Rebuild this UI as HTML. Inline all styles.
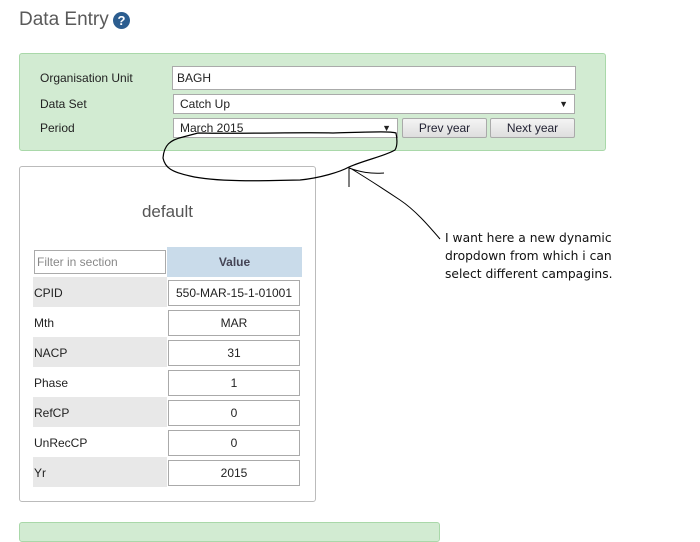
<!DOCTYPE html>
<html><head><style>
*{box-sizing:border-box;margin:0;padding:0}
body{width:700px;height:529px;background:#fff;font-family:"Liberation Sans",sans-serif;position:relative;overflow:hidden;color:#222}
.a{position:absolute}
.lbl{font-size:12px;color:#222}
.inp{position:absolute;background:#fff;border:1px solid #aaa;font-size:12px;padding-left:6px;line-height:normal;display:flex;align-items:center}
.btn{position:absolute;background:linear-gradient(#f4f4f4,#dedede);border:1px solid #aaa;border-radius:2px;font-size:12px;color:#223;display:flex;align-items:center;justify-content:center}
.row{position:absolute;left:33px;width:134px;height:30px;font-size:12px;padding:9px 0 0 1px}
.g{background:#e8e8e8}
.val{position:absolute;left:168px;width:132px;height:26px;border:1px solid #aaa;background:#fff;font-size:12px;text-align:center;line-height:24px}
.note{font-family:"DejaVu Sans","Liberation Sans",sans-serif;font-size:12.3px;color:#111;line-height:18px}
</style></head><body>
<div class="a" style="left:19px;top:9px;font-size:19px;color:#5a5a5a">Data Entry</div>
<div class="a" style="left:113px;top:12px;width:17px;height:17px;border-radius:50%;background:#2c5d8f;color:#fff;font-size:13px;font-weight:bold;text-align:center;line-height:17px">?</div>

<div class="a" style="left:19px;top:53px;width:587px;height:98px;background:#d2ebd2;border:1px solid #a9d8a9;border-radius:3px"></div>
<div class="a lbl" style="left:40px;top:71px">Organisation Unit</div>
<div class="a lbl" style="left:40px;top:97px">Data Set</div>
<div class="a lbl" style="left:40px;top:121px">Period</div>
<div class="inp" style="left:172px;top:66px;width:404px;height:24px;padding-left:4px">BAGH</div>
<div class="inp" style="left:173px;top:94px;width:402px;height:20px">Catch Up<span style="position:absolute;right:6px;font-size:9px">▼</span></div>
<div class="inp" style="left:173px;top:118px;width:225px;height:20px">March 2015<span style="position:absolute;right:6px;font-size:9px">▼</span></div>
<div class="btn" style="left:402px;top:118px;width:85px;height:20px">Prev year</div>
<div class="btn" style="left:490px;top:118px;width:85px;height:20px">Next year</div>

<div class="a" style="left:19px;top:166px;width:297px;height:336px;border:1px solid #bbb;border-radius:3px"></div>
<div class="a" style="left:19px;top:202px;width:297px;text-align:center;font-size:17px;color:#555">default</div>
<div class="inp" style="left:34px;top:250px;width:132px;height:24px;color:#888;padding-left:2px">Filter in section</div>
<div class="a" style="left:167px;top:247px;width:135px;height:30px;background:#c9dbea;font-size:12px;font-weight:bold;color:#445;text-align:center;line-height:30px">Value</div>

<div class="row g" style="top:277px">CPID</div><div class="val" style="top:280px">550-MAR-15-1-01001</div>
<div class="row" style="top:307px">Mth</div><div class="val" style="top:310px">MAR</div>
<div class="row g" style="top:337px">NACP</div><div class="val" style="top:340px">31</div>
<div class="row" style="top:367px">Phase</div><div class="val" style="top:370px">1</div>
<div class="row g" style="top:397px">RefCP</div><div class="val" style="top:400px">0</div>
<div class="row" style="top:427px">UnRecCP</div><div class="val" style="top:430px">0</div>
<div class="row g" style="top:457px">Yr</div><div class="val" style="top:460px">2015</div>

<div class="a" style="left:19px;top:522px;width:421px;height:20px;background:#d2ebd2;border:1px solid #a9d8a9;border-radius:3px"></div>

<svg class="a" style="left:0;top:0" width="700" height="529">
<path d="M333,133 C300,132 250,134 198,133 L183,137 C170,140 164,145 163,158 C165,168 172,172 190,176 C215,182 260,181 300,180 C320,178 340,172 349,167 C365,160 385,156 395,150 C398,145 397,138 396,133 C390,131 370,132 333,133" fill="none" stroke="#000" stroke-width="1.2"/>
<path d="M349,167 L349,187 M349,168 C360,172 370,174 384,173 M350,168 C370,180 385,190 400,200 C415,210 428,225 440,239" fill="none" stroke="#000" stroke-width="1"/>
</svg>
<div class="a note" style="left:445px;top:229px">I want here a new dynamic<br>dropdown from which i can<br>select different campagins.</div>
</body></html>
